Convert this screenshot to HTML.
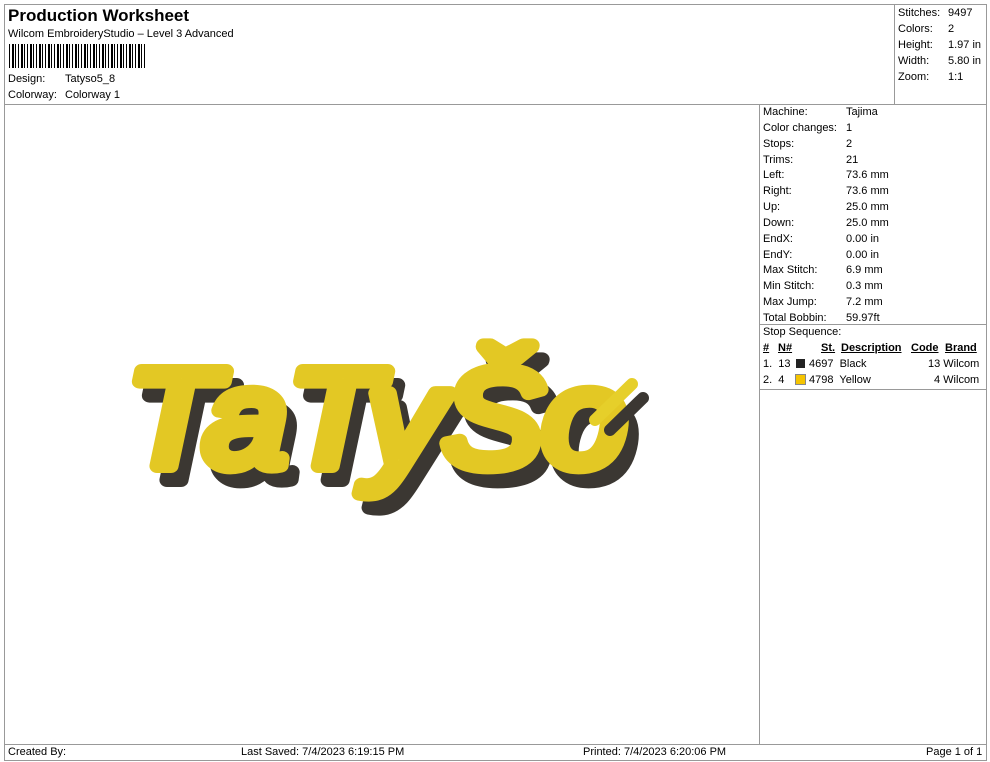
<!DOCTYPE html>
<html><head><style>
body{margin:0;width:990px;height:762px;background:#fff;font-family:"Liberation Sans",sans-serif;font-size:11px;color:#000;position:relative;overflow:hidden}
.a{position:absolute;white-space:nowrap}
.l{position:absolute;background:#999}
</style></head><body>
<div class="l" style="left:4px;top:4px;width:982px;height:1px"></div>
<div class="l" style="left:4px;top:4px;width:1px;height:756px"></div>
<div class="l" style="left:986px;top:4px;width:1px;height:756px"></div>
<div class="l" style="left:4px;top:760px;width:983px;height:1px"></div>
<div class="l" style="left:4px;top:104px;width:982px;height:1px"></div>
<div class="l" style="left:894px;top:4px;width:1px;height:100px"></div>
<div class="l" style="left:759px;top:104px;width:1px;height:640px"></div>
<div class="l" style="left:759px;top:324px;width:227px;height:1px"></div>
<div class="l" style="left:759px;top:389px;width:227px;height:1px"></div>
<div class="l" style="left:4px;top:744px;width:982px;height:1px"></div>

<div class="a" style="left:8px;top:6px;font-size:17px;font-weight:bold">Production Worksheet</div>
<div class="a" style="left:8px;top:28px">Wilcom EmbroideryStudio – Level 3 Advanced</div>
<div class="a" style="left:9px;top:44px;width:136px;height:24px;background:repeating-linear-gradient(90deg,#000 0 1px,#fff 1px 3px,#000 3px 5px,#fff 5px 6px,#000 6px 7px,#fff 7px 9px)"></div>
<div class="a" style="left:8px;top:73px">Design:</div><div class="a" style="left:65px;top:73px">Tatyso5_8</div>
<div class="a" style="left:8px;top:89px">Colorway:</div><div class="a" style="left:65px;top:89px">Colorway 1</div>

<div class="a" style="left:898px;top:5px;line-height:16px">Stitches:<br>Colors:<br>Height:<br>Width:<br>Zoom:</div>
<div class="a" style="left:948px;top:5px;line-height:16px">9497<br>2<br>1.97 in<br>5.80 in<br>1:1</div>

<div class="a" style="left:763px;top:105px;line-height:15.85px">Machine:<br>Color changes:<br>Stops:<br>Trims:<br>Left:<br>Right:<br>Up:<br>Down:<br>EndX:<br>EndY:<br>Max Stitch:<br>Min Stitch:<br>Max Jump:<br>Total Bobbin:</div>
<div class="a" style="left:846px;top:105px;line-height:15.85px">Tajima<br>1<br>2<br>21<br>73.6 mm<br>73.6 mm<br>25.0 mm<br>25.0 mm<br>0.00 in<br>0.00 in<br>6.9 mm<br>0.3 mm<br>7.2 mm<br>59.97ft</div>
<div class="a" style="left:763px;top:326px">Stop Sequence:</div>
<div class="a" style="left:763px;top:342px;font-weight:bold;text-decoration:underline">#</div>
<div class="a" style="left:778px;top:342px;font-weight:bold;text-decoration:underline">N#</div>
<div class="a" style="left:821px;top:342px;font-weight:bold;text-decoration:underline">St.</div>
<div class="a" style="left:841px;top:342px;font-weight:bold;text-decoration:underline">Description</div>
<div class="a" style="left:911px;top:342px;font-weight:bold;text-decoration:underline">Code</div>
<div class="a" style="left:945px;top:342px;font-weight:bold;text-decoration:underline">Brand</div>
<div class="a" style="left:763px;top:358px">1.&nbsp; 13</div>
<div class="a" style="left:796px;top:359px;width:9px;height:9px;background:#222"></div>
<div class="a" style="left:809px;top:358px">4697&nbsp; Black</div>
<div class="a" style="left:928px;top:358px">13 Wilcom</div>
<div class="a" style="left:763px;top:374px">2.&nbsp; 4</div>
<div class="a" style="left:796px;top:375px;width:9px;height:9px;background:#f5c400;outline:1px solid #888;box-sizing:border-box"></div>
<div class="a" style="left:809px;top:374px">4798&nbsp; Yellow</div>
<div class="a" style="left:934px;top:374px">4 Wilcom</div>

<svg class="a" style="left:0;top:0" width="760" height="740">
<g font-family="Liberation Sans,sans-serif" font-style="italic" font-size="138" stroke-linejoin="round">
<text x="136" y="480" textLength="500" lengthAdjust="spacingAndGlyphs" fill="#3b3732" stroke="#3b3732" stroke-width="14">TaTyŠo</text>
<text x="126" y="466" textLength="500" lengthAdjust="spacingAndGlyphs" fill="#e6cf2a" stroke="#e3c824" stroke-width="14">TaTyŠo</text>
</g>
<line x1="602" y1="418" x2="635" y2="386" stroke="#3b3732" stroke-width="12" stroke-linecap="round" transform="translate(8,12)"/>
<line x1="595" y1="420" x2="632" y2="384" stroke="#e6cf2a" stroke-width="12" stroke-linecap="round"/>
</svg>

<div class="a" style="left:8px;top:746px">Created By:</div>
<div class="a" style="left:241px;top:746px">Last Saved: 7/4/2023 6:19:15 PM</div>
<div class="a" style="left:583px;top:746px">Printed: 7/4/2023 6:20:06 PM</div>
<div class="a" style="left:926px;top:746px">Page 1 of 1</div>
</body></html>
